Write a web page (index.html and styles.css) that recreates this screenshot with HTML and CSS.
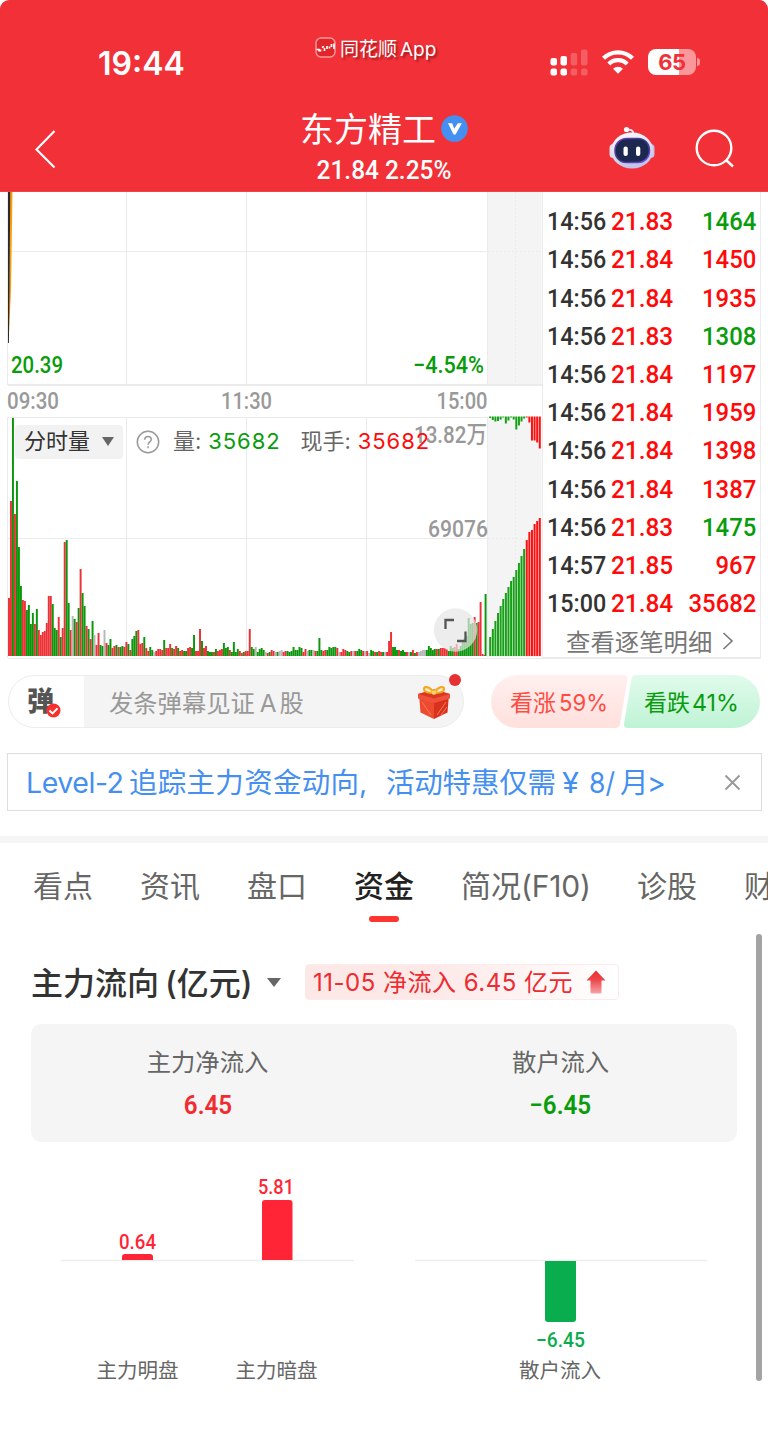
FILE: index.html
```html
<!DOCTYPE html>
<html lang="zh-CN">
<head>
  <meta charset="UTF-8">
  <meta name="viewport" content="width=device-width, initial-scale=1.0">
  <title>东方精工</title>
  <link rel="stylesheet" href="styles.css">
</head>
<body>
  <header class="header">
    <div class="status-bar">
      <span class="clock">19:44</span>
      <span class="app-mark">
        <svg width="21" height="21" viewBox="0 0 21 21">
          <rect x="1" y="1" width="19" height="19" rx="5" fill="#e0262b" stroke="#f99a9c" stroke-width="1.4"/>
          <path d="M1.500 12.500h2.500v2M5.500 14.500v-2M7 10.500l2-1M9.500 11v3M12 9v3M14.500 9.500v2M16.500 7v3M19 6.500v5.500" fill="none" stroke="#fff" stroke-width="1.700"/>
        </svg>
        <span>同花顺<i>App</i></span>
      </span>
      <span class="status-icons">
        <svg width="38" height="27" viewBox="0 0 38 27" fill="#fff">
          <rect x="0.500" y="9" width="6.500" height="7.500" rx="2"/>
          <rect x="10.500" y="7" width="6.500" height="9.500" rx="2"/>
          <rect x="0.500" y="19.500" width="6.500" height="7" rx="2"/>
          <rect x="10.500" y="19.500" width="6.500" height="7" rx="2"/>
          <g opacity="0.220">
            <rect x="20.700" y="4" width="6.500" height="12.500" rx="2"/>
            <rect x="31" y="0.500" width="6.500" height="16" rx="2"/>
            <rect x="20.700" y="19.500" width="6.500" height="7" rx="2"/>
            <rect x="31" y="19.500" width="6.500" height="7" rx="2"/>
          </g>
        </svg>
        <svg class="wifi" width="32" height="24" viewBox="0 0 32 24" fill="none" stroke="#fff">
          <path d="M1.500 8.300a20.500 20.500 0 0 1 29 0" stroke-width="4.300"/>
          <path d="M6.800 14a13 13 0 0 1 18.400 0" stroke-width="4.200"/>
          <path d="M16 23.800l-5-5a7.300 7.300 0 0 1 10 0z" fill="#fff" stroke="none"/>
        </svg>
        <span class="battery"><b>65</b></span>
        <span class="battery-cap"></span>
      </span>
    </div>
    <nav class="nav">
      <svg class="back" width="22" height="40" viewBox="0 0 22 40"><path d="M19.500 2L1.500 20.500l18 18" fill="none" stroke="#fff" stroke-width="2.200"/></svg>
      <div class="stock">
        <h1>东方精工
          <svg width="27" height="27" viewBox="0 0 27 27"><circle cx="13.500" cy="13.500" r="13.300" fill="#458ff0"/><path d="M7 8.300h4.200l2 5.500 3.700-5.500h4L14.500 19.500h-2z" fill="#fff"/></svg>
        </h1>
        <p class="num">21.84 2.25%</p>
      </div>
      <svg class="robot" width="48" height="44" viewBox="0 0 48 44">
        <defs>
          <linearGradient id="shell" x1="0" y1="0" x2="0.300" y2="1"><stop offset="0" stop-color="#fff"/><stop offset="1" stop-color="#c4c3e8"/></linearGradient>
          <linearGradient id="rim" x1="0" y1="0" x2="1" y2="1"><stop offset="0" stop-color="#7a3ec8"/><stop offset="0.500" stop-color="#313a78"/><stop offset="1" stop-color="#7b4cf0"/></linearGradient>
        </defs>
        <path d="M18 4c5-1 7 0 7.500 4" fill="none" stroke="#e9e3f4" stroke-width="2"/>
        <circle cx="18.500" cy="3.500" r="2.600" fill="#fff"/>
        <rect x="1.500" y="18" width="8" height="14" rx="4" fill="#dcdcf2"/>
        <rect x="38.500" y="18" width="8" height="14" rx="4" fill="#c4c3ea"/>
        <ellipse cx="24" cy="24.500" rx="21" ry="18" fill="url(#shell)"/>
        <rect x="7" y="12.500" width="34.500" height="24" rx="11.500" fill="#1c2850" stroke="url(#rim)" stroke-width="1.500"/>
        <rect x="15.500" y="20.500" width="4.300" height="9.500" rx="2.100" fill="#fff"/>
        <rect x="28" y="20.500" width="4.300" height="9.500" rx="2.100" fill="#fff"/>
      </svg>
      <svg class="search" width="40" height="40" viewBox="0 0 40 40" fill="none" stroke="#fff" stroke-width="2.400"><circle cx="19" cy="19" r="17.300"/><path d="M31 31l7 6.500"/></svg>
    </nav>
  </header>

  <section class="quote">
    <div class="chart">
      <svg id="chart-svg" width="542" height="468" viewBox="0 192 542 468">
        <rect x="487" y="192" width="54.500" height="193" fill="#f4f4f4"/>
        <rect x="487" y="417" width="54.500" height="240" fill="#f4f4f4"/>
        <g class="grid-lines">
          <path d="M7.500 192V385M7.500 417V658M126.500 192V385M126.500 417V657M246.500 192V385M246.500 417V657M366.500 192V385M366.500 417V657M487.500 192V385M487.500 417V657"/>
          <path d="M8 251.500H487M8 417.500H487M8 538.500H487M8 658.500H542"/>
          <path d="M8 385H542" stroke-width="2"/>
          <path d="M515.500 192V385M515.500 417V657M488 251.500H541M488 538.500H541" stroke-dasharray="2 2"/>
        </g>
        <path d="M10.200 192H12.500L11 290 8.500 343z" fill="#ff9c0a"/>
        <path d="M8 192H10.300L9.500 290 8.900 343H8z" fill="#2a2a2a"/>
        <g id="bars"></g>
        <g class="axis num">
          <text class="down" x="11" y="372.500" textLength="52" lengthAdjust="spacingAndGlyphs">20.39</text>
          <text class="down" x="413" y="372.500" textLength="71" lengthAdjust="spacingAndGlyphs">−4.54%</text>
          <text x="7" y="408.500" textLength="52" lengthAdjust="spacingAndGlyphs">09:30</text>
          <text x="221" y="408.500" textLength="51" lengthAdjust="spacingAndGlyphs">11:30</text>
          <text x="436.500" y="408.500" textLength="51" lengthAdjust="spacingAndGlyphs">15:00</text>
          <text x="414" y="442.500" textLength="73" lengthAdjust="spacingAndGlyphs">13.82万</text>
          <text x="428" y="536.500" textLength="60" lengthAdjust="spacingAndGlyphs">69076</text>
        </g>
        <circle cx="455.500" cy="630" r="21.700" fill="#e5e5e5" opacity="0.700"/>
        <path d="M445.500 629V620H454M465.500 631.500V641H457" fill="none" stroke="#555" stroke-width="2.300"/>
      </svg>
      <div class="indicator">
        <span class="picker"><span>分时量</span><i class="caret"></i></span>
        <svg width="24" height="24" viewBox="0 0 24 24"><circle cx="12" cy="12" r="10.700" fill="none" stroke="#999" stroke-width="1.500"/><path d="M8.700 9.700c0-4.400 6.600-4.200 6.600-0.300 0 2.500-3.200 2.600-3.200 5.300M12.100 16.300v1.900" fill="none" stroke="#999" stroke-width="1.500"/></svg>
        <span class="ind-name">量:</span><span class="ind-val down">35682</span>
        <span class="ind-name now">现手:</span><span class="ind-val up">35682</span>
      </div>
    </div>
    <div class="ticks">
      <ul class="num" id="ticks"></ul>
      <a class="more"><span>查看逐笔明细</span> <svg width="12" height="20" viewBox="0 0 12 20"><path d="M1.500 2l8.500 8-8.500 8" fill="none" stroke="#777" stroke-width="1.600"/></svg></a>
    </div>
  </section>

  <section class="barrage">
    <div class="barrage-input">
      <span class="barrage-toggle">弹
        <svg width="15" height="15" viewBox="0 0 15 15"><circle cx="7.500" cy="7.500" r="7" fill="#f5312e"/><path d="M3.500 7.500l3 2.900 5-5" fill="none" stroke="#fff" stroke-width="2"/></svg>
      </span>
      <span class="placeholder">发条弹幕见证<i>A</i>股</span>
      <svg class="gift" width="34" height="36" viewBox="0 0 34 36">
        <path d="M2 10L17 14.500V35L3.500 28.500z" fill="#ee4a30"/>
        <path d="M32 10L17 14.500V35L30.500 28.500z" fill="#d8321f"/>
        <path d="M1 10L17 5.500l16 4.500v4.500L17 19 1 14.500z" fill="#f0513a"/>
        <path d="M1 10L17 5.500l16 4.500L17 14.500z" fill="#d93822"/>
        <path d="M20 31l9-13M24 31l6-8M5 18l9 13" stroke="#f57a55" stroke-width="1"/>
        <path d="M17 9C12 1 5 2 7.500 6.500 9 9 14 9 17 9zM17 9c5-8 12-7 9.500-2.500C25 9 20 9 17 9z" fill="#fff3d0" stroke="#f6a823" stroke-width="2.300"/>
        <circle cx="17" cy="8.500" r="2.300" fill="#ffd564"/>
      </svg>
      <i class="dot"></i>
    </div>
    <div class="vote">
      <svg width="269" height="53" viewBox="0 0 269 53">
        <defs>
          <linearGradient id="up-bg" x1="0" y1="0" x2="0" y2="1"><stop offset="0" stop-color="#fff0ef"/><stop offset="1" stop-color="#ffe0dd"/></linearGradient>
          <linearGradient id="down-bg" x1="0" y1="0" x2="0" y2="1"><stop offset="0" stop-color="#e1fbec"/><stop offset="1" stop-color="#bff3d5"/></linearGradient>
        </defs>
        <path d="M26.500 0H133q4 0 3.500 4l-7.500 45q-0.700 4-4.500 4H26.500a26.500 26.500 0 0 1 0-53z" fill="url(#up-bg)"/>
        <path d="M144.500 0H242.500a26.500 26.500 0 0 1 0 53H137q-4.500 0-4-4l7.500-45q0.700-4 4-4z" fill="url(#down-bg)"/>
        <g fill="#ff4b42">
          <text x="19" y="35.500">看涨</text>
          <text x="68" y="35.500" textLength="49" lengthAdjust="spacingAndGlyphs">59%</text>
        </g>
        <g fill="#099c0c">
          <text x="153" y="35.500">看跌</text>
          <text x="201" y="35.500" textLength="47" lengthAdjust="spacingAndGlyphs">41%</text>
        </g>
      </svg>
    </div>
  </section>

  <section class="notice">
    <svg width="645" height="40" viewBox="0 0 645 40">
      <g fill="#458ff0">
        <text x="0" y="30.500" textLength="98">Level-2</text>
        <text x="103" y="30.500" textLength="230">追踪主力资金动向</text>
        <text x="333" y="30.500">,</text>
        <text x="360" y="30.500" textLength="170">活动特惠仅需</text>
        <text x="536" y="30.500" textLength="17" lengthAdjust="spacingAndGlyphs">¥</text>
        <text x="563" y="30.500" textLength="26" lengthAdjust="spacingAndGlyphs">8/</text>
        <text x="594" y="30.500">月</text>
        <text x="621" y="30.500">&gt;</text>
      </g>
    </svg>
    <svg width="17" height="17" viewBox="0 0 17 17"><path d="M1.500 1.500l14 14M15.500 1.500l-14 14" stroke="#999" stroke-width="1.900"/></svg>
  </section>

  <nav class="tabs">
    <a>看点</a>
    <a>资讯</a>
    <a>盘口</a>
    <a class="active">资金</a>
    <a class="f10">简况<span>(F10)</span></a>
    <a>诊股</a>
    <a>财务</a>
  </nav>

  <main class="fund">
    <div class="fund-head">
      <h2>主力流向<span>(</span>亿元<span>)</span></h2>
      <i class="caret"></i>
      <div class="tag"><span>11-05 净流入 6.45 亿元</span>
        <svg width="20" height="24" viewBox="0 0 20 24">
          <defs><linearGradient id="arrow" x1="0" y1="0" x2="0" y2="1"><stop offset="0" stop-color="#ea2c30"/><stop offset="0.400" stop-color="#ed4548"/><stop offset="1" stop-color="#f6a3a5"/></linearGradient></defs>
          <path d="M10 0.500L19.500 10.500H15.500V22q0 1.500-1.500 1.500H6q-1.500 0-1.500-1.500V10.500H0.500z" fill="url(#arrow)"/>
        </svg>
      </div>
    </div>
    <div class="summary">
      <div>
        <span>主力净流入</span>
        <b class="num red">6.45</b>
      </div>
      <div>
        <span>散户流入</span>
        <b class="num down">−6.45</b>
      </div>
    </div>
    <svg class="flow" width="706" height="230" viewBox="31 1160 706 230">
      <path d="M61 1260.500H354M415 1260.500H707" stroke="#ededed" stroke-width="1.300"/>
      <g fill="#ff2436">
        <path d="M122 1260v-3q0-3 3-3h25q3 0 3 3v3z"/>
        <path d="M262 1260v-57q0-3 3-3h24.500q3 0 3 3v57z"/>
        <text class="num" x="137.500" y="1249" textLength="37" lengthAdjust="spacingAndGlyphs">0.64</text>
        <text class="num" x="276" y="1194" textLength="36" lengthAdjust="spacingAndGlyphs">5.81</text>
      </g>
      <g fill="#0aad4d">
        <path d="M545 1261v58q0 3 3 3h25q3 0 3-3v-58z"/>
        <text class="num" x="560.500" y="1347" textLength="49" lengthAdjust="spacingAndGlyphs">−6.45</text>
      </g>
      <g fill="#666">
        <text x="137.500" y="1377.500" textLength="82">主力明盘</text>
        <text x="276.500" y="1377.500" textLength="82">主力暗盘</text>
        <text x="560" y="1377.500" textLength="82">散户流入</text>
      </g>
    </svg>
    <i class="scroll-thumb"></i>
  </main>

  <script src="script.js"></script>
</body>
</html>
```

FILE: styles.css
```css
* {
  box-sizing: border-box;
  margin: 0;
  padding: 0;
}

html {
  background: #fff;
}

body {
  width: 768px;
  height: 1444px;
  overflow: hidden;
  background: #fff;
  color: #333;
  font-family: Inter, "Noto Sans CJK SC", sans-serif;
}

svg {
  display: block;
  flex: none;
}

i {
  font-style: normal;
}

.num {
  font-family: Roboto, "Noto Sans CJK SC", sans-serif;
  font-weight: 500;
}

.up {
  color: #ff0a0a;
  fill: #ff0a0a;
}

.down {
  color: #099c0c;
  fill: #099c0c;
}

.red {
  color: #f12c31;
}

/* header */
.header {
  height: 192px;
  background: #f13037;
  border-radius: 9px 9px 0 0;
  color: #fff;
  border-bottom: 1px solid #f0464b;
}

.status-bar {
  display: flex;
  height: 96px;
  padding: 0 68px 0 98px;
}

.clock {
  width: 217px;
  padding-top: 43px;
  font-size: 32px;
  line-height: 41px;
  font-weight: 600;
}

.app-mark {
  display: flex;
  gap: 4px;
  width: 235px;
  padding-top: 37px;
  font-size: 19px;
  line-height: 25px;
  text-shadow: 2px 2px 2px rgba(90, 0, 0, 0.5);
}

.app-mark i {
  margin-left: 3px;
}

.status-icons {
  display: flex;
  padding-top: 49px;
}

.wifi {
  margin: 1px 14px 0 14px;
}

.battery {
  width: 48px;
  height: 26px;
  border-radius: 8px;
  background: linear-gradient(90deg, #fff 65%, #f9979b 65%);
  color: #f13037;
  font-size: 22px;
  line-height: 27px;
  text-align: center;
}

.battery b {
  font-weight: 700;
  letter-spacing: -0.5px;
}

.battery-cap {
  width: 3px;
  height: 8px;
  margin: 9px 0 0 1px;
  border-radius: 0 4px 4px 0;
  background: #f9979b;
}

.nav {
  display: flex;
  padding-left: 35px;
}

.back {
  margin-top: 33px;
}

.stock {
  width: 270px;
  margin-left: 192px;
  text-align: center;
}

.stock h1 {
  display: flex;
  align-items: center;
  justify-content: center;
  gap: 5px;
  margin-top: 15px;
  font-size: 34px;
  line-height: 38px;
  font-weight: 400;
}

.stock h1 svg {
  margin-bottom: 4px;
}

.stock p {
  margin-top: 7px;
  font-size: 26px;
  line-height: 28px;
  transform: scaleX(0.94);
}

.robot {
  margin: 30px 0 0 89px;
}

.search {
  margin: 33px 0 0 39px;
}

/* intraday chart + tick list */
.quote {
  display: flex;
  height: 468px;
}

.chart {
  position: relative;
  width: 542px;
}

.grid-lines path {
  fill: none;
  stroke: #ebebeb;
}

.axis {
  font-size: 23.5px;
  fill: #999;
}

.indicator {
  position: absolute;
  left: 15px;
  top: 232px;
  display: flex;
  align-items: center;
  height: 35px;
  font-size: 22px;
  line-height: 30px;
}

.picker {
  display: flex;
  align-items: center;
  gap: 12px;
  width: 108px;
  height: 34px;
  margin-right: 13px;
  padding-left: 9px;
  border-radius: 4px;
  background: #f2f2f2;
}

.picker span,
.ind-name {
  margin-top: -2px;
}

.caret {
  border: 6.5px solid transparent;
  border-top: 9px solid #666;
  border-bottom: 0;
}

.ind-name {
  margin-left: 13px;
  color: #666;
}

.ind-name.now {
  margin-left: 20px;
}

.ind-val {
  margin: -1px 0 0 7px;
  letter-spacing: 0.9px;
}

.ticks {
  width: 219px;
  height: 467px;
  overflow: hidden;
  border: solid #ebebeb;
  border-width: 0 1px 2px 1px;
}

.ticks ul {
  margin-top: -29px;
  list-style: none;
}

.ticks li {
  display: flex;
  height: 38.2px;
  padding: 0 4px 0 4px;
  font-size: 26.5px;
  line-height: 39px;
}

.ticks .time {
  width: 64px;
  transform: scaleX(0.88);
  transform-origin: left;
}

.ticks .price {
  flex: 1;
  transform: scaleX(0.92);
  transform-origin: left;
}

.ticks .vol {
  transform: scaleX(0.9);
  transform-origin: right;
}

.more {
  display: flex;
  align-items: center;
  gap: 10px;
  margin: 2px 0 0 23px;
  height: 36px;
  font-size: 24.4px;
  color: #777;
}

.more span {
  margin-top: -2px;
}

/* barrage row */
.barrage {
  display: flex;
  justify-content: space-between;
  padding: 15px 8px 0;
}

.barrage-input {
  position: relative;
  display: flex;
  align-items: center;
  width: 456px;
  height: 53px;
  border: 1.500px solid #ececec;
  border-radius: 27px;
  background: linear-gradient(90deg, #fff 75px, #f4f4f4 75px);
}

.barrage-toggle {
  position: relative;
  width: 75px;
  padding-left: 18px;
  font-size: 27px;
  line-height: 50px;
  font-weight: 900;
  color: #555;
}

.barrage-toggle svg {
  position: absolute;
  left: 37px;
  top: 26px;
}

.placeholder {
  width: 334px;
  margin-top: -1px;
  padding-left: 25px;
  font-size: 24.3px;
  color: #999;
}

.placeholder i {
  margin: 0 3px 0 5px;
}

.gift {
  margin-left: -1px;
}

.dot {
  position: absolute;
  right: 2px;
  top: -2px;
  width: 12px;
  height: 12px;
  border-radius: 50%;
  background: #e63134;
}

.vote text {
  font-size: 23px;
}

/* notice */
.notice {
  display: flex;
  align-items: center;
  justify-content: space-between;
  width: 755px;
  height: 58px;
  margin: 25px 0 0 7px;
  padding: 0 20px 0 18px;
  border: 1.500px solid #dedede;
}

.notice text {
  font-size: 28.5px;
}

/* tabs */
.tabs {
  display: flex;
  gap: 47px;
  margin-top: 25px;
  padding: 20px 0 0 33px;
  border-top: 7px solid #f5f5f5;
  font-size: 30px;
  line-height: 46px;
  color: #666;
  white-space: nowrap;
  overflow: hidden;
}

.tabs a {
  flex: none;
  height: 60px;
}

.tabs .active {
  color: #222;
  font-weight: 500;
}

.tabs .active::after {
  content: "";
  display: block;
  width: 30px;
  height: 6px;
  margin: 7px auto 0;
  border-radius: 3px;
  background: #ff3630;
}

.tabs .f10 {
  width: 129px;
}

.tabs .f10 span {
  letter-spacing: -0.2px;
}

/* fund flow */
.fund {
  position: relative;
  padding: 0 31px;
}

.fund-head {
  display: flex;
  align-items: center;
  height: 36px;
  margin-top: 41px;
}

.fund-head h2 {
  width: 222px;
  margin-top: -3px;
  font-size: 32px;
  font-weight: 500;
  white-space: nowrap;
}

.fund-head h2 span {
  margin-left: 6px;
}

.fund-head h2 span + span {
  margin-left: 0;
}

.fund-head .caret {
  margin: 0 24px 0 14px;
  border-width: 9px 7.5px 0;
}

.tag {
  display: flex;
  align-items: center;
  justify-content: space-between;
  width: 314px;
  height: 36px;
  padding: 0 12px 0 7px;
  border: 1px solid #fdeaea;
  border-radius: 4px;
  background: linear-gradient(90deg, #fde8e8 40%, #fff);
  color: #ee2b30;
  font-size: 24px;
  letter-spacing: 0.5px;
  white-space: nowrap;
}

.tag span {
  margin-top: -4px;
}

.summary {
  display: flex;
  height: 118px;
  margin-top: 24px;
  border-radius: 10px;
  background: #f5f5f5;
}

.summary div {
  display: flex;
  flex: 1;
  flex-direction: column;
  align-items: center;
  padding-top: 20px;
}

.summary span {
  font-size: 24.3px;
  line-height: 36px;
  color: #666;
}

.summary b {
  margin-top: 9px;
  font-size: 26px;
  line-height: 32px;
  font-weight: 600;
  transform: scaleX(0.93);
}

.flow {
  margin-top: 18px;
  font-size: 20.500px;
  text-anchor: middle;
}

.scroll-thumb {
  position: absolute;
  right: 6px;
  top: -30px;
  width: 6px;
  height: 447px;
  border-radius: 3px;
  background: #a3a3a3;
}
```

FILE: script.js
```js
// per-minute volume: r = up, g = down, n = flat, followed by bar height
const minutes = `r58 r155 g238 r142 g175 g109 g70 r56 r55 g46 g51 g32 g43 r32 g47 r26 r21 r24 r25 r33
r60 r60 g52 g28 g26 r39 g19 r28 r114 g116 g53 r26 n40 g37 r34 g48 r87 g63 g50 r30
g27 r17 g35 n21 r11 r23 g11 g10 n26 r13 g11 g17 r8 r10 g11 r9 g9 g10 r9 r14
g12 r6 g17 g20 g25 r26 r12 r13 g19 r8 r5 g9 g6 n4 r5 r7 r7 r6 g16 r8
r8 r12 g8 r7 r10 g8 r5 r6 g5 g5 r8 r9 g8 g21 r5 r5 r27 g15 r8 r10
g5 g4 g4 r4 g7 r5 r6 r7 g13 g8 g9 r6 g4 g14 g4 g7 r5 r3 g4 r5
r5 r27 g9 g7 n9 g4 g7 g8 g6 n4 r3 g4 r6 r5 n4 g4 n5 n6 r4 r5
g5 g4 g5 g9 g6 g6 g9 g8 r4 r7 n5 g6 g6 n6 r5 g5 g18 g6 r5 r6
g6 g9 g8 g9 g9 r8 n4 r4 r7 r6 g5 g4 r5 n5 r5 g5 g7 g6 r5 n5
r5 n3 g6 g5 r4 g4 r5 r4 g4 n4 r4 r15 r24 g9
g9 g6 r6 g5 g6 g4 r4 n4 g4 r6 g3 r4 n4 n5 n6 n6 g6 g10
g8 g6 g7 r7 g7 r8 r8 r8 r7 g5 g10 g8 r9 r12 g7 g10 g14 g18 g20 g38
g32 g33 r39 g33 r34 r54 r2 r1 g62`.split(/\s+/);

// order book depth, cumulative from the bottom and per level from the top
const depth = [19, 27, 35, 43, 50, 57, 63, 69, 75, 79, 86, 93, 100, 107, 116, 124, 126, 132, 135, 138];
const levels = [1.5, 3.5, 5, 4.5, 3, 1, 7, 4, 1, 3, 13, 9, 5, 2, 1, 6, 24, 24, 26, 32];

const colors = { r: '#ed3237', g: '#0b960b', n: '#b8b8b8' };
const bars = document.getElementById('bars');

function addBar(x, y, width, height, fill) {
  const rect = document.createElementNS('http://www.w3.org/2000/svg', 'rect');
  rect.setAttribute('x', x);
  rect.setAttribute('y', y);
  rect.setAttribute('width', width);
  rect.setAttribute('height', height);
  rect.setAttribute('fill', fill);
  bars.appendChild(rect);
}

minutes.forEach((item, i) => {
  const h = Number(item.slice(1));
  const x = i === minutes.length - 1 ? 484.6 : 8 + i * 1.99;
  addBar(x, 656 - h, 1.95, h, colors[item[0]]);
});

depth.forEach((h, i) => {
  const fill = i < 14 ? '#16a016' : '#ff1010';
  addBar(489.2 + i * 2.61, 656 - h, 2, h, fill);
  addBar(489.2 + i * 2.61, 416.5, 2, levels[i], fill);
});

const ticks = [
  ['14:56', '21.83', 1547, 'up'],
  ['14:56', '21.83', 1464, 'down'],
  ['14:56', '21.84', 1450, 'up'],
  ['14:56', '21.84', 1935, 'up'],
  ['14:56', '21.83', 1308, 'down'],
  ['14:56', '21.84', 1197, 'up'],
  ['14:56', '21.84', 1959, 'up'],
  ['14:56', '21.84', 1398, 'up'],
  ['14:56', '21.84', 1387, 'up'],
  ['14:56', '21.83', 1475, 'down'],
  ['14:57', '21.85', 967, 'up'],
  ['15:00', '21.84', 35682, 'up']
];

document.getElementById('ticks').innerHTML = ticks.map(([time, price, vol, dir]) => `
  <li><span class="time">${time}</span><span class="price up">${price}</span><span class="vol ${dir}">${vol}</span></li>
`).join('');
```
